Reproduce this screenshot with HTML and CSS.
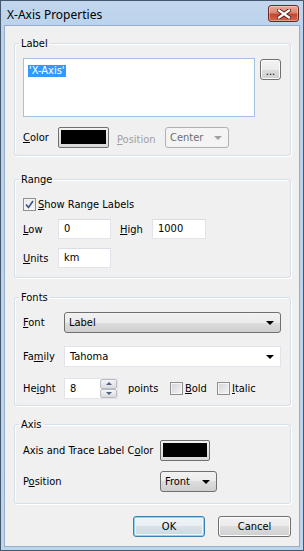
FILE: index.html
```html
<!DOCTYPE html>
<html lang="en">
  <head>
    <meta charset="UTF-8" />
    <title>X-Axis Properties</title>
    <link rel="stylesheet" href="styles.css">
  </head>
  <body>
    <div class="window">
      <div class="titlebar">
        <span class="title">X-Axis Properties</span>
        <span class="close">
          <svg width="14" height="10" viewBox="0 0 14 10">
            <path d="M2 1.5 L12 8.5 M12 1.5 L2 8.5" stroke="#5b1d14" stroke-width="4" stroke-linecap="square" />
            <path d="M2 1.5 L12 8.5 M12 1.5 L2 8.5" stroke="#ffffff" stroke-width="2.2" stroke-linecap="square" />
          </svg>
        </span>
      </div>
      <div class="client">
        <fieldset class="group group-label">
          <legend>Label</legend>
          <div class="row">
            <div class="textarea"><span class="sel">'X-Axis'</span></div>
            <span class="btn dots">...</span>
          </div>
          <div class="row row-color">
            <span class="lbl w35"><u>C</u>olor</span>
            <span class="swatch w51"><span></span></span>
            <span class="lbl off pos-lbl"><u>P</u>osition</span>
            <span class="combo off w64">Center<span class="arrow"></span></span>
          </div>
        </fieldset>

        <fieldset class="group group-range">
          <legend>Range</legend>
          <div class="row row-check">
            <span class="check on">
              <svg width="9" height="9" viewBox="0 0 9 9"><path d="M1 4.5 L3.5 7.5 L8 1" fill="none" stroke="#3c4f8c" stroke-width="1.6" /></svg>
            </span>
            <span class="lbl"><u>S</u>how Range Labels</span>
          </div>
          <div class="row row-low">
            <span class="lbl w35"><u>L</u>ow</span>
            <span class="input w53">0</span>
            <span class="lbl high-lbl"><u>H</u>igh</span>
            <span class="input w54">1000</span>
          </div>
          <div class="row row-units">
            <span class="lbl w35"><u>U</u>nits</span>
            <span class="input w53">km</span>
          </div>
        </fieldset>

        <fieldset class="group group-fonts">
          <legend>Fonts</legend>
          <div class="row">
            <span class="lbl w41"><u>F</u>ont</span>
            <span class="combo w217">Label<span class="arrow"></span></span>
          </div>
          <div class="row row-family">
            <span class="lbl w41">Fa<u>m</u>ily</span>
            <span class="combo edit w217">Tahoma<span class="arrow"></span></span>
          </div>
          <div class="row row-height">
            <span class="lbl w41">He<u>i</u>ght</span>
            <span class="spin">
              <span class="spin-val">8</span>
              <span class="spin-btns">
                <span class="spin-btn"><span class="arrow up"></span></span>
                <span class="spin-btn"><span class="arrow down"></span></span>
              </span>
            </span>
            <span class="lbl points">points</span>
            <span class="check"></span>
            <span class="lbl w32"><u>B</u>old</span>
            <span class="check"></span>
            <span class="lbl"><u>I</u>talic</span>
          </div>
        </fieldset>

        <fieldset class="group group-axis">
          <legend>Axis</legend>
          <div class="row">
            <span class="lbl w137">Axis and Trace Label C<u>o</u>lor</span>
            <span class="swatch w50"><span></span></span>
          </div>
          <div class="row row-axispos">
            <span class="lbl w137">P<u>o</u>sition</span>
            <span class="combo w57">Front<span class="arrow"></span></span>
          </div>
        </fieldset>

        <div class="buttons">
          <span class="btn default">OK</span>
          <span class="btn">Cancel</span>
        </div>
      </div>
    </div>
  </body>
</html>
```

FILE: styles.css
```css
* {
  margin: 0;
  padding: 0;
  box-sizing: border-box;
}
body {
  font-family: "DejaVu Sans Condensed", "DejaVu Sans", sans-serif;
  font-size: 11px;
  color: #000;
  background: #fff;
}
u {
  text-decoration: underline;
  text-underline-offset: 1px;
}

/* window frame */
.window {
  width: 304px;
  height: 551px;
  border: 1px solid #45586c;
  background: linear-gradient(#c2d7ee, #bad2ec 30px, #bdd4ed);
  padding: 0 3px 3px;
  display: flex;
  flex-direction: column;
}
.titlebar {
  height: 24px;
  display: flex;
  align-items: center;
  justify-content: space-between;
  padding: 0 1px 0 3px;
}
.title {
  font-family: "Noto Sans", "Open Sans", sans-serif;
  font-size: 12px;
  color: #000;
  margin-top: 2px;
}
.close {
  width: 31px;
  height: 17px;
  margin-top: 1px;
  border: 1px solid #6a2a22;
  border-radius: 3px;
  background: linear-gradient(#e9a897, #d88672 45%, #c6472f 55%, #d2674e);
  display: flex;
  align-items: center;
  justify-content: center;
  box-shadow: inset 0 0 0 1px rgba(255, 255, 255, 0.35);
}
.client {
  flex: 1;
  background: #f0f0f0;
  border: 1px solid #96aec8;
  padding: 11px 8px 0 9px;
}

/* group boxes */
.group {
  border: 1px solid #d5dfe5;
  border-radius: 3px;
  box-shadow: inset 1px 1px 0 #fff, 1px 1px 0 #fff;
  padding: 0 9px 0 8px;
}
.group legend {
  line-height: 13px;
  padding: 0 2px;
  margin-left: -4px;
}
.group-label {
  padding-top: 8px;
  padding-bottom: 7px;
}
.group-range {
  margin-top: 17px;
  padding-top: 12px;
  padding-bottom: 9px;
}
.group-fonts {
  margin-top: 13px;
  padding-top: 8px;
  padding-bottom: 6px;
}
.group-axis {
  margin-top: 12px;
  padding-top: 9px;
  padding-bottom: 11px;
}

.row {
  display: flex;
  align-items: center;
}
.row-color {
  margin-top: 10px;
}
.row-check {
  height: 13px;
}
.row-low {
  margin-top: 8px;
}
.row-units {
  margin-top: 9px;
}
.row-family {
  margin-top: 13px;
}
.row-height {
  margin-top: 11px;
}
.row-axispos {
  margin-top: 10px;
}

.lbl {
  white-space: nowrap;
}
.off {
  color: #a0a0a0;
}
.w32 { width: 32px; }
.w35 { width: 35px; }
.w41 { width: 41px; }
.w137 { width: 137px; }
.w50 { width: 50px; }
.w51 { width: 51px; }
.w53 { width: 53px; }
.w54 { width: 54px; }
.w57 { width: 57px; }
.w64 { width: 64px; }
.w217 { width: 217px; }
.pos-lbl {
  margin-left: 8px;
  width: 48px;
  margin-top: 4px;
}
.high-lbl {
  margin-left: 9px;
  width: 32px;
}
.points {
  margin-left: 10px;
  width: 42px;
}

/* edit controls */
.textarea {
  width: 232px;
  height: 59px;
  background: #fff;
  border: 1px solid #a2c3e3;
  padding: 5px 4px;
}
.sel {
  background: #3399ff;
  color: #fff;
  padding: 0 1px;
  line-height: 12px;
  display: inline-block;
}
.input {
  height: 20px;
  background: #fff;
  border: 1px solid #e2e3ea;
  border-top-color: #dcdde4;
  padding: 0 5px;
  line-height: 18px;
}

/* buttons */
.btn {
  display: flex;
  align-items: center;
  justify-content: center;
  height: 21px;
  border: 1px solid #707070;
  border-radius: 3px;
  background: linear-gradient(#f2f2f2, #ebebeb 50%, #dddddd 50%, #cfcfcf);
  box-shadow: inset 0 0 0 1px #fcfcfc;
}
.dots {
  width: 21px;
  margin-left: 5px;
  align-self: flex-start;
  margin-top: 1px;
  padding-top: 4px;
}
.swatch {
  height: 21px;
  border: 1px solid #707070;
  border-radius: 2px;
  background: linear-gradient(#f2f2f2, #d8d8d8);
  padding: 2px 2px 3px;
  display: flex;
}
.swatch span {
  flex: 1;
  background: #000;
}
.buttons {
  display: flex;
  justify-content: flex-end;
  gap: 13px;
  margin-top: 12px;
}
.buttons .btn {
  width: 72px;
}
.buttons .btn + .btn {
  width: 73px;
}
.btn.default {
  border-color: #3c7fb1;
  box-shadow: inset 0 0 0 1px #8fd3f0, inset 0 0 0 2px #eef7fc;
  background: linear-gradient(#f0f4f7, #e8eef2 50%, #d8e2e8 50%, #ccd8e0);
}

/* drop-downs */
.combo {
  height: 21px;
  border: 1px solid #707070;
  border-radius: 3px;
  background: linear-gradient(#f2f2f2, #ebebeb 50%, #dddddd 50%, #cfcfcf);
  display: flex;
  align-items: center;
  justify-content: space-between;
  padding: 0 6px 0 4px;
}
.combo.edit {
  background: #fff;
  border: 1px solid #e2e3ea;
  border-radius: 0;
  padding: 0 6px 0 5px;
}
.combo.off {
  background: #f4f4f4;
  border-color: #adb2b5;
  color: #6d6d6d;
}
.arrow {
  width: 0;
  height: 0;
  border-left: 4px solid transparent;
  border-right: 4px solid transparent;
  border-top: 4px solid #000;
}
.combo.off .arrow {
  border-top-color: #a0a0a0;
}
.arrow.up {
  border-top: 0;
  border-bottom: 3px solid #4d6185;
  border-left-width: 3px;
  border-right-width: 3px;
}
.arrow.down {
  border-top: 3px solid #4d6185;
  border-left-width: 3px;
  border-right-width: 3px;
}

/* spinner */
.spin {
  width: 54px;
  height: 21px;
  background: #fff;
  border: 1px solid #e2e3ea;
  display: flex;
  justify-content: space-between;
}
.spin-val {
  padding-left: 5px;
  line-height: 19px;
}
.spin-btns {
  width: 17px;
  display: flex;
  flex-direction: column;
}
.spin-btn {
  flex: 1;
  border: 1px solid #b8bcc4;
  border-radius: 2px;
  background: linear-gradient(#f4f4f4, #dcdcdc);
  display: flex;
  align-items: center;
  justify-content: center;
}

/* check boxes */
.check {
  width: 13px;
  height: 13px;
  border: 1px solid #8f8f8f;
  background: linear-gradient(135deg, #d0d3d8, #f6f6f6);
  box-shadow: inset 0 0 0 1px #f4f4f4;
  margin-right: 2px;
  display: flex;
  align-items: center;
  justify-content: center;
}
.check.on {
  background: linear-gradient(135deg, #e6e8ee, #fafafa);
}
```
